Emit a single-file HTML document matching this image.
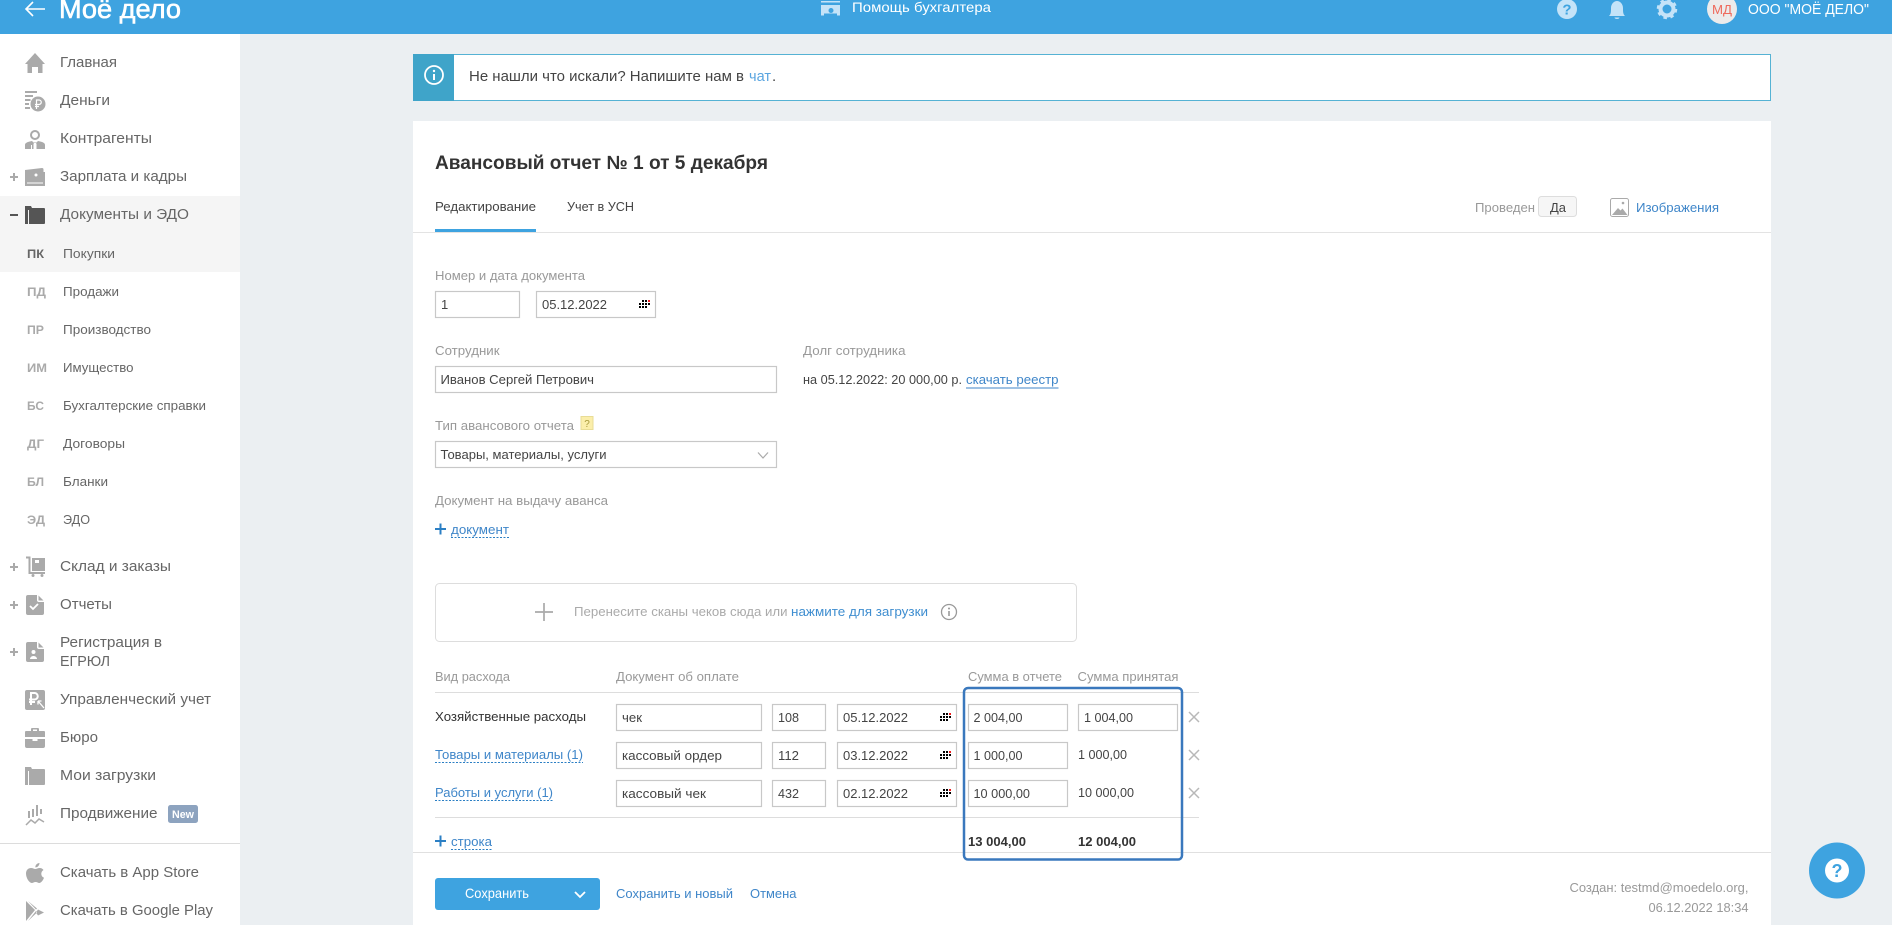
<!DOCTYPE html>
<html lang="ru">
<head>
<meta charset="utf-8">
<title>Авансовый отчет</title>
<style>
html,body{margin:0;padding:0;background:#ebeff2;overflow:hidden;width:1892px;height:925px}
svg{display:block}
text{font-family:"Liberation Sans",Arial,sans-serif;white-space:pre}
.n{font-size:15px;fill:#666}
.s{font-size:13px;fill:#666}
.a{font-size:12px;font-weight:bold;fill:#aaa}
.l{font-size:13px;fill:#999}
.t{font-size:13px;fill:#444}
.b{font-size:13px;fill:#3f86c9}
.f{fill:none;stroke:#c8c8c8;stroke-width:1.2}
.i{fill:#aaa}
</style>
</head>
<body>
<svg width="1892" height="925" viewBox="0 0 1892 925" xmlns="http://www.w3.org/2000/svg">
<defs>
<g id="cal">
<rect x="0" y="3" width="2" height="2" fill="#000"/><rect x="3" y="3" width="2" height="2" fill="#000"/><rect x="6" y="3" width="2" height="2" fill="#000"/><rect x="9" y="3" width="2" height="2" fill="#000"/>
<rect x="0" y="6" width="2" height="2" fill="#000"/><rect x="3" y="6" width="2" height="2" fill="#000"/><rect x="6" y="6" width="2" height="2" fill="#000"/>
<rect x="3" y="0" width="2" height="2" fill="#000"/><rect x="6" y="0" width="2" height="2" fill="#000"/><rect x="9" y="0" width="2" height="2" fill="#f01c1c"/>
</g>
<path id="x" d="M-5 -5L5 5M5 -5L-5 5" stroke="#b8b8b8" stroke-width="1.5" fill="none"/>
</defs>

<rect width="1892" height="925" fill="#ebeff2"/>

<!-- header -->
<rect width="1892" height="34" fill="#3ea3e0"/>
<path d="M33 2L26 9L33 16M26 9H45" stroke="#fff" stroke-width="1.6" fill="none"/>
<text x="59" y="18" font-size="27" fill="#fff" stroke="#fff" stroke-width=".6" textLength="122" lengthAdjust="spacingAndGlyphs">Моё дело</text>
<path d="M821 1h19v1.500h-19zM821 5h19v10.500h-3v-2h-13v2h-3z" fill="#c4e3f8"/>
<circle cx="831" cy="10.500" r="2.500" fill="#3ea3e0"/>
<text x="852" y="12" font-size="14" fill="#fff" textLength="139" lengthAdjust="spacingAndGlyphs">Помощь бухгалтера</text>
<circle cx="1567" cy="9" r="10" fill="#c4e3f8"/>
<text x="1567" y="14.500" font-size="15" font-weight="bold" fill="#3ea3e0" text-anchor="middle">?</text>
<path d="M1609 16c2-2 2-4 2-8c0-4 3-7 6-7s6 3 6 7c0 4 0 6 2 8zM1614.500 17.500h5c0 2-5 2-5 0z" fill="#c4e3f8"/>
<circle cx="1667" cy="9" r="6.500" fill="none" stroke="#c4e3f8" stroke-width="4"/>
<circle cx="1667" cy="9" r="9" fill="none" stroke="#c4e3f8" stroke-width="2.500" stroke-dasharray="3.500 3.570"/>
<circle cx="1722" cy="9" r="15" fill="#ecebeb"/>
<text x="1712" y="14" font-size="13" fill="#ee6a5c" textLength="20" lengthAdjust="spacingAndGlyphs">МД</text>
<text x="1748" y="14" font-size="14.500" fill="#fff" textLength="121" lengthAdjust="spacingAndGlyphs">ООО "МОЁ ДЕЛО"</text>

<!-- sidebar -->
<rect x="0" y="34" width="240" height="891" fill="#fff"/>
<rect x="0" y="196" width="240" height="76" fill="#f5f5f5"/>

<text class="n" x="60" y="67" textLength="57" lengthAdjust="spacingAndGlyphs">Главная</text>
<text class="n" x="60" y="105" textLength="50" lengthAdjust="spacingAndGlyphs">Деньги</text>
<text class="n" x="60" y="143" textLength="92" lengthAdjust="spacingAndGlyphs">Контрагенты</text>
<text class="n" x="60" y="181" textLength="127" lengthAdjust="spacingAndGlyphs">Зарплата и кадры</text>
<text class="n" x="60" y="219" textLength="129" lengthAdjust="spacingAndGlyphs">Документы и ЭДО</text>

<text class="a" x="27" y="258" style="fill:#666" textLength="17" lengthAdjust="spacingAndGlyphs">ПК</text>
<text class="s" x="63" y="258" textLength="52" lengthAdjust="spacingAndGlyphs">Покупки</text>
<text class="a" x="27" y="296" textLength="19" lengthAdjust="spacingAndGlyphs">ПД</text>
<text class="s" x="63" y="296" textLength="56" lengthAdjust="spacingAndGlyphs">Продажи</text>
<text class="a" x="27" y="334" textLength="17" lengthAdjust="spacingAndGlyphs">ПР</text>
<text class="s" x="63" y="334" textLength="88" lengthAdjust="spacingAndGlyphs">Производство</text>
<text class="a" x="27" y="372" textLength="20" lengthAdjust="spacingAndGlyphs">ИМ</text>
<text class="s" x="63" y="372" textLength="70.500" lengthAdjust="spacingAndGlyphs">Имущество</text>
<text class="a" x="27" y="410" textLength="17" lengthAdjust="spacingAndGlyphs">БС</text>
<text class="s" x="63" y="410" textLength="143" lengthAdjust="spacingAndGlyphs">Бухгалтерские справки</text>
<text class="a" x="27" y="448" textLength="17" lengthAdjust="spacingAndGlyphs">ДГ</text>
<text class="s" x="63" y="448" textLength="62" lengthAdjust="spacingAndGlyphs">Договоры</text>
<text class="a" x="27" y="486" textLength="17" lengthAdjust="spacingAndGlyphs">БЛ</text>
<text class="s" x="63" y="486" textLength="45" lengthAdjust="spacingAndGlyphs">Бланки</text>
<text class="a" x="27" y="524" textLength="18" lengthAdjust="spacingAndGlyphs">ЭД</text>
<text class="s" x="63" y="524" textLength="27" lengthAdjust="spacingAndGlyphs">ЭДО</text>

<text class="n" x="60" y="571" textLength="111" lengthAdjust="spacingAndGlyphs">Склад и заказы</text>
<text class="n" x="60" y="609" textLength="52" lengthAdjust="spacingAndGlyphs">Отчеты</text>
<text class="n" x="60" y="647" textLength="102" lengthAdjust="spacingAndGlyphs">Регистрация в</text>
<text class="n" x="60" y="666" textLength="50" lengthAdjust="spacingAndGlyphs">ЕГРЮЛ</text>
<text class="n" x="60" y="704" textLength="151" lengthAdjust="spacingAndGlyphs">Управленческий учет</text>
<text class="n" x="60" y="742" textLength="38" lengthAdjust="spacingAndGlyphs">Бюро</text>
<text class="n" x="60" y="780" textLength="96" lengthAdjust="spacingAndGlyphs">Мои загрузки</text>
<text class="n" x="60" y="818" textLength="97.500" lengthAdjust="spacingAndGlyphs">Продвижение</text>
<rect x="168" y="805" width="30" height="18" rx="2.500" fill="#8da3bf"/>
<text x="172" y="818" font-size="11" font-weight="bold" fill="#fff" textLength="22" lengthAdjust="spacingAndGlyphs">New</text>
<rect x="0" y="843" width="240" height="1" fill="#dcdcdc"/>
<text class="n" x="60" y="877" textLength="139" lengthAdjust="spacingAndGlyphs">Скачать в App Store</text>
<text class="n" x="60" y="915" textLength="153" lengthAdjust="spacingAndGlyphs">Скачать в Google Play</text>

<!-- plus / minus -->
<path d="M10 177h8M14 173v8M10 567h8M14 563v8M10 605h8M14 601v8M10 652h8M14 648v8" stroke="#aaa" stroke-width="2" fill="none"/>
<path d="M10 215h8" stroke="#555" stroke-width="2" fill="none"/>

<!-- sidebar icons -->
<path class="i" d="M35 53L45 64H42.500V73H38V67H32V73H27.500V64H25Z"/>
<path class="i" d="M25 91h12v2h-12zM25 95h8v2h-8zM25 99h5.500v2h-5.500zM25 103h4v2h-4zM25 107h5v2h-5z"/>
<circle cx="38" cy="104" r="7.500" class="i"/>
<path d="M36.500 109V100h2.500a2.200 2.200 0 010 4.500h-4M35 106.500h4" stroke="#fff" stroke-width="1.200" fill="none"/>
<circle cx="35" cy="135" r="4" fill="none" stroke="#aaa" stroke-width="2"/>
<path class="i" d="M25 149v-4c0-2 2-3 7-4l1.500 1.500h3L38 141c5 1 7 2 7 4v4h-8.500v-5l-.5-1h-2l-.5 1v5h-1.500v-4h-1v4H25zM37 149v-4h1v4z"/>
<path class="i" d="M25 170l17-2c1 0 1.500.5 1.500 1.500V172H45v14H25z"/>
<path d="M27 183h16" stroke="#fff" stroke-width="1" fill="none"/>
<circle cx="36" cy="175" r="1.500" fill="#fff"/>
<path d="M25 224v-18h6l1 2h12q1 0 1 1v14q0 1-1 1z" fill="#555"/>
<path d="M28.500 224v-14" stroke="#f5f5f5" stroke-width="1" fill="none"/>
<path d="M26 557.500h3.500V573H45" stroke="#aaa" stroke-width="2" fill="none"/>
<rect x="32" y="558" width="13" height="13" class="i"/>
<rect x="35" y="560" width="4" height="3" fill="#fff"/>
<circle cx="33" cy="575.500" r="1.500" class="i"/><circle cx="42" cy="575.500" r="1.500" class="i"/>
<path class="i" d="M28 595h9v5q0 2 2 2h5v11q0 2-2 2H28q-2 0-2-2V597q0-2 2-2zM38.500 595.500l5 5h-5z"/>
<path d="M30 606l3 3 5-5" stroke="#fff" stroke-width="1.800" fill="none"/>
<path class="i" d="M28 642h9v5q0 2 2 2h5v11q0 2-2 2H28q-2 0-2-2V644q0-2 2-2zM38.500 642.500l5 5h-5z"/>
<circle cx="33.500" cy="652" r="2" fill="#fff"/>
<path d="M30 659c0-2 2-3 3.500-3s3.500 1 3.500 3z" fill="#fff"/>
<rect x="25" y="690" width="20" height="20" rx="2" class="i"/>
<path d="M31 705V693h3.500a3 3 0 010 6.500H29M29 702h6" stroke="#fff" stroke-width="2" fill="none"/>
<path d="M38 701l6 7M38 701h3.500M38 701v3.500" stroke="#fff" stroke-width="1.300" fill="none"/>
<path class="i" d="M31 731v-2q0-1 1-1h6q1 0 1 1v2h5q1 0 1 1v5H25v-5q0-1 1-1zM33 731h4v-1.500h-4zM25 739h7.500v2h5v-2H45v7q0 2-2 2H27q-2 0-2-2z"/>
<path d="M25 785v-18h6l1 2h12q1 0 1 1v14q0 1-1 1z" class="i"/>
<path d="M28.500 785v-14" stroke="#fff" stroke-width="1" fill="none"/>
<path d="M29 811v7M33 809v8M37 805v11M41 809v5" stroke="#aaa" stroke-width="2" fill="none"/>
<path d="M26 825l5-5 4 3 4-4 5 3" stroke="#aaa" stroke-width="1.500" fill="none"/>
<path class="i" d="M39.500 863c0 2.500-2 4.500-4.200 4.300 0-2.300 2-4.300 4.200-4.300zM31 868c2 0 3 1 4.300 1s2.500-1 4.500-1c1.500 0 2.800.8 3.700 2-3.300 2-2.700 6.500.5 7.800-1 2.700-3 5.200-4.700 5.200-1.300 0-2-1-3.700-1s-2.500 1-3.800 1c-2.500 0-5.800-5-5.800-9.500 0-3.700 2.500-5.500 5-5.500z"/>
<path class="i" d="M26 901l9 9-9 11zM28 901l9 7.500-1 1zM28 921l9-8.500-1-1.500zM38 909.500l6 3-6 3-2-3z"/>

<!-- notice -->
<rect x="413.500" y="54.500" width="1357" height="46" fill="#fff" stroke="#55b2d4"/>
<rect x="413" y="54" width="41" height="47" fill="#3fa4c9"/>
<circle cx="434" cy="75" r="9" fill="none" stroke="#fff" stroke-width="1.800"/>
<path d="M434 74v6" stroke="#fff" stroke-width="2" fill="none"/>
<circle cx="434" cy="71" r="1.200" fill="#fff"/>
<text x="469" y="81" font-size="15" fill="#444" textLength="275" lengthAdjust="spacingAndGlyphs">Не нашли что искали? Напишите нам в</text>
<text x="749" y="81" font-size="15" fill="#5aa5e0" textLength="22" lengthAdjust="spacingAndGlyphs">чат</text>
<text x="772" y="81" font-size="15" fill="#444">.</text>

<!-- card -->
<rect x="413" y="121" width="1358" height="804" fill="#fff"/>
<text x="435" y="169" font-size="19" font-weight="bold" fill="#333" textLength="333" lengthAdjust="spacingAndGlyphs">Авансовый отчет № 1 от 5 декабря</text>
<text class="t" x="435" y="211" textLength="101" lengthAdjust="spacingAndGlyphs">Редактирование</text>
<text class="t" x="567" y="211" textLength="67" lengthAdjust="spacingAndGlyphs">Учет в УСН</text>
<rect x="413" y="232" width="1358" height="1" fill="#e3e3e3"/>
<rect x="435" y="229" width="101" height="3" fill="#3ea3e0"/>

<text class="l" x="1475" y="212" textLength="60" lengthAdjust="spacingAndGlyphs">Проведен</text>
<rect x="1538.500" y="196.500" width="38" height="20" rx="3" fill="#f6f6f6" stroke="#ddd"/>
<text x="1550" y="212" font-size="13" fill="#444" textLength="16" lengthAdjust="spacingAndGlyphs">Да</text>
<rect x="1610.500" y="198.500" width="18" height="18" rx="2" fill="#fff" stroke="#aaa"/>
<path class="i" d="M1612 215l6-7 2.500 2.500 2-2 5 6.500z"/>
<circle cx="1623" cy="203" r="1.300" class="i"/>
<text class="b" x="1636" y="212" textLength="83" lengthAdjust="spacingAndGlyphs">Изображения</text>

<text class="l" x="435" y="280" textLength="150" lengthAdjust="spacingAndGlyphs">Номер и дата документа</text>
<rect class="f" x="435.500" y="291.500" width="84" height="26"/>
<text class="t" x="441" y="309">1</text>
<rect class="f" x="536.500" y="291.500" width="119" height="26"/>
<text class="t" x="542" y="309" textLength="65" lengthAdjust="spacingAndGlyphs">05.12.2022</text>
<use href="#cal" x="639" y="300"/>

<text class="l" x="435" y="355" textLength="64.500" lengthAdjust="spacingAndGlyphs">Сотрудник</text>
<text class="l" x="803" y="355" textLength="102.500" lengthAdjust="spacingAndGlyphs">Долг сотрудника</text>
<rect class="f" x="435.500" y="366.500" width="341" height="26"/>
<text class="t" x="440.500" y="384" textLength="153.500" lengthAdjust="spacingAndGlyphs">Иванов Сергей Петрович</text>
<text class="t" x="803" y="384" textLength="159" lengthAdjust="spacingAndGlyphs">на 05.12.2022: 20 000,00 р.</text>
<text class="b" x="966" y="384" textLength="92.500" lengthAdjust="spacingAndGlyphs">скачать реестр</text>
<rect x="966" y="387.500" width="92.500" height="1" fill="#3f86c9"/>

<text class="l" x="435" y="430" textLength="139" lengthAdjust="spacingAndGlyphs">Тип авансового отчета</text>
<rect x="581" y="416.500" width="12" height="13" fill="#fbeeaa" stroke="#e8dc96"/>
<text x="587" y="427" font-size="10" fill="#a89a3c" text-anchor="middle">?</text>
<rect class="f" x="435.500" y="441.500" width="341" height="26"/>
<text class="t" x="440.500" y="459" textLength="166" lengthAdjust="spacingAndGlyphs">Товары, материалы, услуги</text>
<path d="M758 452.500l5 5.500 5-5.500" stroke="#aaa" stroke-width="1.200" fill="none"/>

<text class="l" x="435" y="505" textLength="173" lengthAdjust="spacingAndGlyphs">Документ на выдачу аванса</text>
<path d="M435 529h11M440.500 523.500v11" stroke="#2b7fc4" stroke-width="2" fill="none"/>
<text class="b" x="451" y="534" textLength="58" lengthAdjust="spacingAndGlyphs">документ</text>
<path d="M451 537.500H509" stroke="#2b7fc4" stroke-width="1" stroke-dasharray="2 1.500" fill="none"/>

<rect x="435.500" y="583.500" width="641" height="58" rx="4" fill="#fff" stroke="#ddd"/>
<path d="M535 612h18M544 603v18" stroke="#aaa" stroke-width="1.700" fill="none"/>
<text x="574" y="616" font-size="13" fill="#aaa" textLength="213.500" lengthAdjust="spacingAndGlyphs">Перенесите сканы чеков сюда или</text>
<text x="791" y="616" font-size="13" fill="#3f8ed0" textLength="137" lengthAdjust="spacingAndGlyphs">нажмите для загрузки</text>
<circle cx="949" cy="612" r="7.500" fill="none" stroke="#999" stroke-width="1.300"/>
<path d="M949 611v5" stroke="#999" stroke-width="1.600" fill="none"/>
<circle cx="949" cy="608.500" r="1" fill="#999"/>

<!-- table -->
<text class="l" x="435" y="681" textLength="75" lengthAdjust="spacingAndGlyphs">Вид расхода</text>
<text class="l" x="616" y="681" textLength="123" lengthAdjust="spacingAndGlyphs">Документ об оплате</text>
<text class="l" x="968" y="681" textLength="94" lengthAdjust="spacingAndGlyphs">Сумма в отчете</text>
<text class="l" x="1077.500" y="681" textLength="101" lengthAdjust="spacingAndGlyphs">Сумма принятая</text>
<rect x="435" y="692" width="764" height="1" fill="#ddd"/>

<text x="435" y="721" font-size="13" fill="#333" textLength="151" lengthAdjust="spacingAndGlyphs">Хозяйственные расходы</text>
<text class="b" x="435" y="759" textLength="148" lengthAdjust="spacingAndGlyphs">Товары и материалы (1)</text>
<path d="M435 762.500H583" stroke="#2b7fc4" stroke-width="1" stroke-dasharray="2 1.500" fill="none"/>
<text class="b" x="435" y="797" textLength="118" lengthAdjust="spacingAndGlyphs">Работы и услуги (1)</text>
<path d="M435 800.500H553" stroke="#2b7fc4" stroke-width="1" stroke-dasharray="2 1.500" fill="none"/>

<!-- row 1 -->
<rect class="f" x="616.500" y="704.500" width="145" height="26"/>
<text class="t" x="622" y="722" textLength="20" lengthAdjust="spacingAndGlyphs">чек</text>
<rect class="f" x="772.500" y="704.500" width="53" height="26"/>
<text class="t" x="778" y="722" textLength="21" lengthAdjust="spacingAndGlyphs">108</text>
<rect class="f" x="837.500" y="704.500" width="119" height="26"/>
<text class="t" x="843" y="722" textLength="65" lengthAdjust="spacingAndGlyphs">05.12.2022</text>
<use href="#cal" x="940" y="713"/>
<rect class="f" x="968.500" y="704.500" width="99" height="26"/>
<text class="t" x="973.500" y="722" textLength="49" lengthAdjust="spacingAndGlyphs">2 004,00</text>
<rect class="f" x="1078.500" y="704.500" width="99" height="26"/>
<text class="t" x="1084" y="722" textLength="49" lengthAdjust="spacingAndGlyphs">1 004,00</text>
<use href="#x" x="1194" y="717"/>

<!-- row 2 -->
<rect class="f" x="616.500" y="742.500" width="145" height="26"/>
<text class="t" x="622" y="760" textLength="100" lengthAdjust="spacingAndGlyphs">кассовый ордер</text>
<rect class="f" x="772.500" y="742.500" width="53" height="26"/>
<text class="t" x="778" y="760" textLength="21" lengthAdjust="spacingAndGlyphs">112</text>
<rect class="f" x="837.500" y="742.500" width="119" height="26"/>
<text class="t" x="843" y="760" textLength="65" lengthAdjust="spacingAndGlyphs">03.12.2022</text>
<use href="#cal" x="940" y="751"/>
<rect class="f" x="968.500" y="742.500" width="99" height="26"/>
<text class="t" x="973.500" y="760" textLength="49" lengthAdjust="spacingAndGlyphs">1 000,00</text>
<text class="t" x="1078" y="759" textLength="49" lengthAdjust="spacingAndGlyphs">1 000,00</text>
<use href="#x" x="1194" y="755"/>

<!-- row 3 -->
<rect class="f" x="616.500" y="780.500" width="145" height="26"/>
<text class="t" x="622" y="798" textLength="84" lengthAdjust="spacingAndGlyphs">кассовый чек</text>
<rect class="f" x="772.500" y="780.500" width="53" height="26"/>
<text class="t" x="778" y="798" textLength="21" lengthAdjust="spacingAndGlyphs">432</text>
<rect class="f" x="837.500" y="780.500" width="119" height="26"/>
<text class="t" x="843" y="798" textLength="65" lengthAdjust="spacingAndGlyphs">02.12.2022</text>
<use href="#cal" x="940" y="789"/>
<rect class="f" x="968.500" y="780.500" width="99" height="26"/>
<text class="t" x="973.500" y="798" textLength="56.500" lengthAdjust="spacingAndGlyphs">10 000,00</text>
<text class="t" x="1078" y="797" textLength="56" lengthAdjust="spacingAndGlyphs">10 000,00</text>
<use href="#x" x="1194" y="793"/>

<rect x="435" y="817" width="764" height="1" fill="#ddd"/>
<path d="M435 841h11M440.500 835.500v11" stroke="#2b7fc4" stroke-width="2" fill="none"/>
<text class="b" x="451" y="846" textLength="41" lengthAdjust="spacingAndGlyphs">строка</text>
<path d="M451 849.500H492" stroke="#2b7fc4" stroke-width="1" stroke-dasharray="2 1.500" fill="none"/>
<text x="968" y="846" font-size="13" font-weight="bold" fill="#333" textLength="58" lengthAdjust="spacingAndGlyphs">13 004,00</text>
<text x="1078" y="846" font-size="13" font-weight="bold" fill="#333" textLength="58" lengthAdjust="spacingAndGlyphs">12 004,00</text>
<rect x="413" y="852" width="1358" height="1" fill="#e0e0e0"/>

<rect x="964" y="688" width="218" height="171.500" rx="4" fill="none" stroke="#3a78bd" stroke-width="2.500"/>

<!-- footer -->
<rect x="435" y="878" width="165" height="32" rx="3" fill="#3ea3e0"/>
<text x="465" y="898" font-size="14" fill="#fff" textLength="64" lengthAdjust="spacingAndGlyphs">Сохранить</text>
<path d="M575 892l5 5 5-5" stroke="#fff" stroke-width="1.800" fill="none"/>
<text class="b" x="616" y="898" textLength="117" lengthAdjust="spacingAndGlyphs">Сохранить и новый</text>
<text class="b" x="750" y="898" textLength="46.500" lengthAdjust="spacingAndGlyphs">Отмена</text>
<text class="l" x="1569.500" y="892" textLength="179" lengthAdjust="spacingAndGlyphs">Создан: testmd@moedelo.org,</text>
<text class="l" x="1648.500" y="912" textLength="100" lengthAdjust="spacingAndGlyphs">06.12.2022 18:34</text>

<circle cx="1837" cy="870.500" r="28" fill="#3ea3e0"/>
<circle cx="1837" cy="870.500" r="12" fill="#fff"/>
<text x="1837" y="877" font-size="18" font-weight="bold" fill="#3ea3e0" text-anchor="middle">?</text>
</svg>
</body>
</html>
